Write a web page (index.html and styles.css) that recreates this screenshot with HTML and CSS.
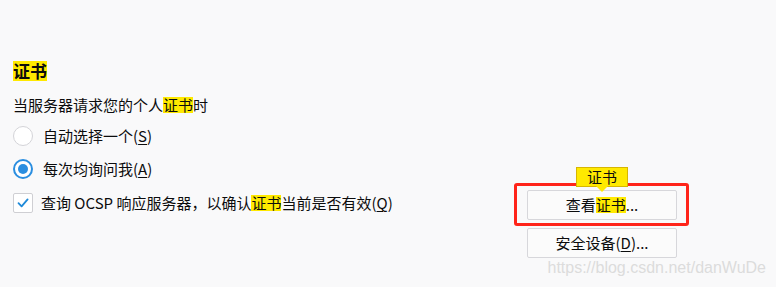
FILE: index.html
```html
<!DOCTYPE html>
<html lang="zh-CN">
<head>
<meta charset="utf-8">
<title>证书</title>
<link rel="stylesheet" href="styles.css">
</head>
<body>
<div class="page">
  <h1 class="title"><span class="hl hl-title">证书</span></h1>
  <p class="desc">当服务器请求您的个人<span class="hl">证书</span>时</p>

  <div class="options">
    <div class="left">
      <label class="choice row1"><span class="radio"></span><span class="label">自动选择一个(<u>S</u>)</span></label>
      <label class="choice row2"><span class="radio checked"></span><span class="label">每次均询问我(<u>A</u>)</span></label>
      <label class="choice row3 check-row"><span class="checkbox"><svg viewBox="0 0 20 20" width="20" height="20"><path d="M5.5 10.2 L8.6 13.4 L14.6 6.4" fill="none" stroke="#1f8ad9" stroke-width="1.8" stroke-linecap="round" stroke-linejoin="round"/></svg></span><span class="label">查询 OCSP 响应服务器，以确认<span class="hl">证书</span>当前是否有效(<u>Q</u>)</span></label>
    </div>
    <div class="buttons">
      <div class="btn-wrap">
        <div class="tooltip">证书</div>
        <button class="btn">查看<span class="hl">证书</span>...</button>
        <div class="annot"></div>
      </div>
      <button class="btn">安全设备(<u>D</u>)...</button>
    </div>
  </div>
</div>
<div class="watermark">https://blog.csdn.net/danWuDe</div>
</body>
</html>
```

FILE: styles.css
```css
html, body {
  margin: 0;
  padding: 0;
  background: #f9f9fa;
}
body {
  width: 776px;
  height: 287px;
  overflow: hidden;
  position: relative;
  color: #0c0c0d;
  font-family: "Noto Sans CJK SC", "Noto Sans", sans-serif;
  font-size: 15px;
}
.page {
  padding: 61px 0 0 13px;
}
.title {
  margin: 0;
  font-size: 17px;
  font-weight: bold;
  line-height: 20px;
  height: 20px;
}
.hl {
  background: #ffe900;
  display: inline-block;
  line-height: 16px;
  height: 16px;
}
.hl-title {
  line-height: 20px;
  height: 20px;
}
.desc {
  margin: 16px 0 0 0;
  line-height: 16px;
  height: 16px;
}
.options {
  display: flex;
  margin-top: 13px;
}
.left {
  width: 514px;
  display: flex;
  flex-direction: column;
}
.choice {
  display: flex;
  align-items: center;
  height: 20px;
  line-height: 20px;
}
.row2 { margin-top: 13px; }
.row3 { margin-top: 14px; }
.radio {
  width: 20px;
  height: 20px;
  box-sizing: border-box;
  border: 1px solid #d4d4d8;
  border-radius: 50%;
  background: #fff;
  margin-right: 10px;
  display: flex;
  align-items: center;
  justify-content: center;
}
.radio.checked {
  border: 2px solid #2a8ee0;
}
.radio.checked::after {
  content: "";
  width: 10px;
  height: 10px;
  border-radius: 50%;
  background: #2a8ee0;
}
.checkbox {
  width: 20px;
  height: 20px;
  box-sizing: border-box;
  border: 1px solid #cfcfd3;
  border-radius: 2px;
  background: #fff;
  margin-right: 8px;
  display: flex;
  align-items: center;
  justify-content: center;
}
.checkbox svg {
  display: block;
  flex: none;
}
.label u {
  text-decoration-thickness: 1px;
  text-underline-offset: 2px;
}
.buttons {
  display: flex;
  flex-direction: column;
  gap: 8px;
  margin-top: 64px;
}
.btn-wrap {
  position: relative;
}
.btn {
  width: 150px;
  height: 30px;
  box-sizing: border-box;
  border: 1px solid #d7d7db;
  border-radius: 2px;
  background: #fbfbfb;
  color: #0c0c0d;
  font-family: "Noto Sans CJK SC", "Noto Sans", sans-serif;
  font-size: 15px;
  line-height: 16px;
  padding: 0;
  display: flex;
  align-items: center;
  justify-content: center;
}
.btn u {
  text-underline-offset: 2px;
}
.tooltip {
  position: absolute;
  left: 49px;
  top: -23px;
  width: 52px;
  height: 20px;
  box-sizing: border-box;
  background: #ffe900;
  border: 1px solid #d7b600;
  color: #0c0c0d;
  font-size: 15px;
  line-height: 17px;
  text-align: center;
  z-index: 2;
}
.tooltip::after {
  content: "";
  position: absolute;
  left: 19px;
  top: 18px;
  border-left: 6px solid transparent;
  border-right: 6px solid transparent;
  border-top: 6px solid #ffe900;
}
.annot {
  position: absolute;
  left: -13px;
  top: -7px;
  width: 175px;
  height: 43px;
  box-sizing: border-box;
  border: 3px solid #ff2419;
  border-radius: 3px;
  pointer-events: none;
}
.watermark {
  position: absolute;
  right: 10px;
  top: 257px;
  font-family: "Liberation Sans", Arial, sans-serif;
  font-size: 16px;
  line-height: 22px;
  color: #dcdcdc;
}
```
